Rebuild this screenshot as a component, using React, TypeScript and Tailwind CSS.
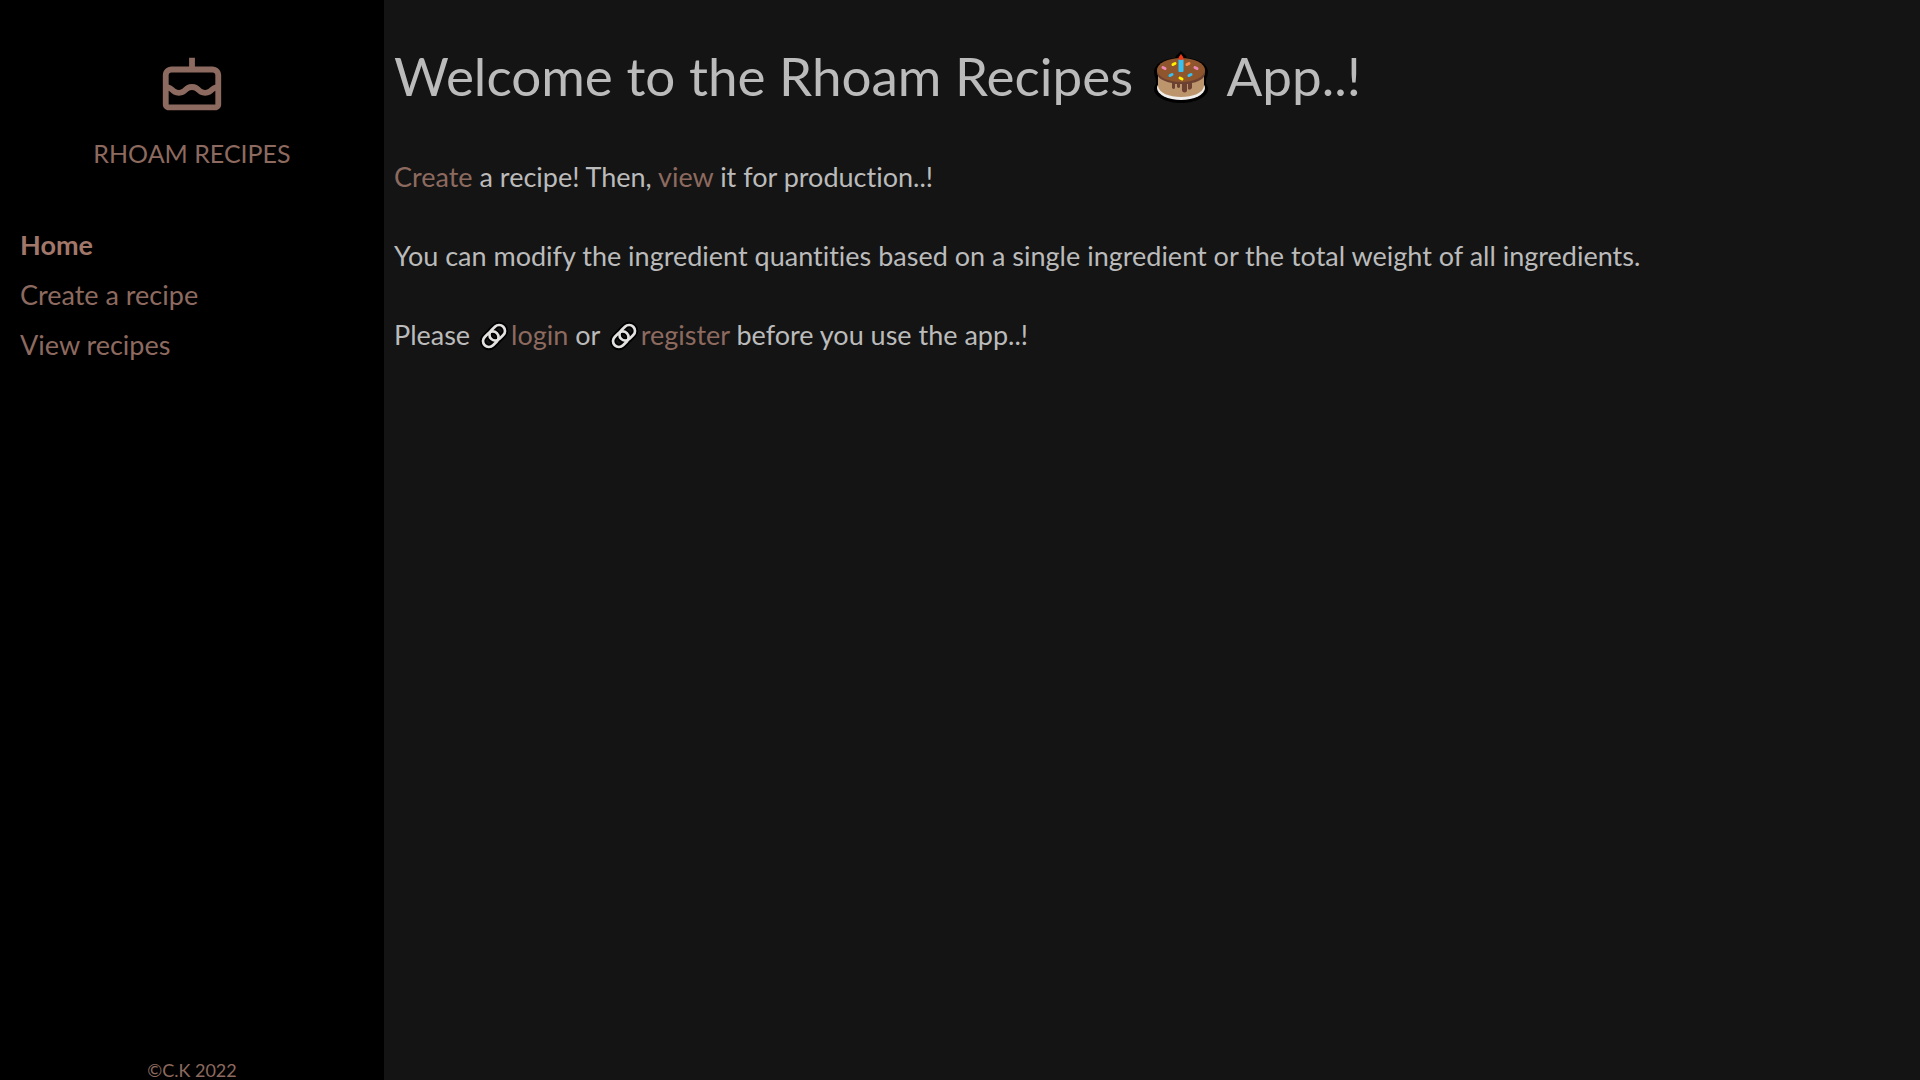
import React from "react";
import { BiCake } from "react-icons/bi";

function CakeEmoji() {
  return (
    <svg viewBox="0 0 56 54" className="mx-1.5 inline-block h-[54px] w-[56px] align-[-8px]" role="img" aria-label="cake">
      <path d="M28 1 L33 6 L34 8 C46 9 54 14 55 21 C55 26 53 28 53 31 V34 C54 35 55 37 55 39 C55 47 42 53 28 53 S1 47 1 39 C1 37 2 35 3 34 V31 C3 28 1 26 1 21 C2 14 10 9 22 8 L23 6Z" fill="#000" />
      <ellipse cx="28" cy="38" rx="24" ry="12" fill="#f0eeec" />
      <path d="M5 22H51V36C50 43 40 47 28 47S6 43 5 36Z" fill="#bd956c" />
      <path d="M4 20C3 27 8 31 19 33V38Q21 40 22 38V34H24V37Q26 39 27 37V34H29V41Q32 44 34 41V34H35V39Q37 41 39 38V33C49 31 53 27 52 20Z" fill="#6d4132" />
      <ellipse cx="28" cy="20" rx="24" ry="12" fill="#8f562e" />
      <rect x="25.500" y="9" width="5" height="13" rx="1" fill="#35c1f1" />
      <path d="M28 4Q33 10 28 10Q23 10 28 4" fill="#f03a17" />
      <g strokeWidth="3" strokeLinecap="round">
        <path d="M20 14.500L22 13.500M27 28L29 29" stroke="#fff100" />
        <path d="M34 14.500L36 13.500" stroke="#f7894a" />
        <path d="M10 17.500L12 18.500M42 17.500L44 18.500" stroke="#ef87b5" />
        <path d="M17 25.500L19 24.500M36 25.500L38 24.500" stroke="#35c1f1" />
      </g>
    </svg>
  );
}

function LinkEmoji() {
  return (
    <svg viewBox="0 0 28 28" className="mx-0.5 inline-block size-[30px] align-[-6px]" aria-hidden="true">
      <g fill="none" stroke="#000" strokeWidth="6">
        <rect x="-8" y="-5.500" width="16" height="11" rx="5.500" transform="translate(11 17) rotate(-45)" />
        <rect x="-8" y="-5.500" width="16" height="11" rx="5.500" transform="translate(17 11) rotate(-45)" />
      </g>
      <g fill="none" stroke="#e4e2e0" strokeWidth="2.500">
        <rect x="-8" y="-5.500" width="16" height="11" rx="5.500" transform="translate(11 17) rotate(-45)" />
        <rect x="-8" y="-5.500" width="16" height="11" rx="5.500" transform="translate(17 11) rotate(-45)" />
      </g>
    </svg>
  );
}

export default function App() {
  return (
    <div className="flex min-h-screen bg-[#141414] font-['Lato',sans-serif] text-[27px] leading-8 text-[#bbbbbb] [font-variant-ligatures:none]">
      <aside className="flex w-1/5 shrink-0 flex-col bg-black text-[#8d6a5f]">
        <a href="#home" className="flex flex-col items-center pt-[52px]">
          <BiCake className="size-[70px]" aria-hidden="true" />
          <span className="mt-[15px] text-[25px]">RHOAM RECIPES</span>
        </a>
        <nav className="mt-[60px] flex flex-col gap-[18px] px-5">
          <a href="#home" className="font-bold text-[#a1776a]">Home</a>
          <a href="#create">Create a recipe</a>
          <a href="#view">View recipes</a>
        </nav>
        <footer className="mt-auto text-center text-lg leading-5">©C.K 2022</footer>
      </aside>
      <main className="min-w-0 flex-1 px-[10px] pt-[46px]">
        <h1 className="text-[53px] leading-[60px]">
          Welcome to the Rhoam Recipes <CakeEmoji /> App..!
        </h1>
        <p className="mt-[55px]">
          <a href="#create" className="text-[#8d6a5f]">Create</a> a recipe! Then, <a href="#view" className="text-[#8d6a5f]">view</a> it for production..!
        </p>
        <p className="mt-[47px]">You can modify the ingredient quantities based on a single ingredient or the total weight of all ingredients.</p>
        <p className="mt-[47px]">
          Please <LinkEmoji />
          <a href="#login" className="text-[#8d6a5f]">login</a> or <LinkEmoji />
          <a href="#register" className="text-[#8d6a5f]">register</a> before you use the app..!
        </p>
      </main>
    </div>
  );
}
